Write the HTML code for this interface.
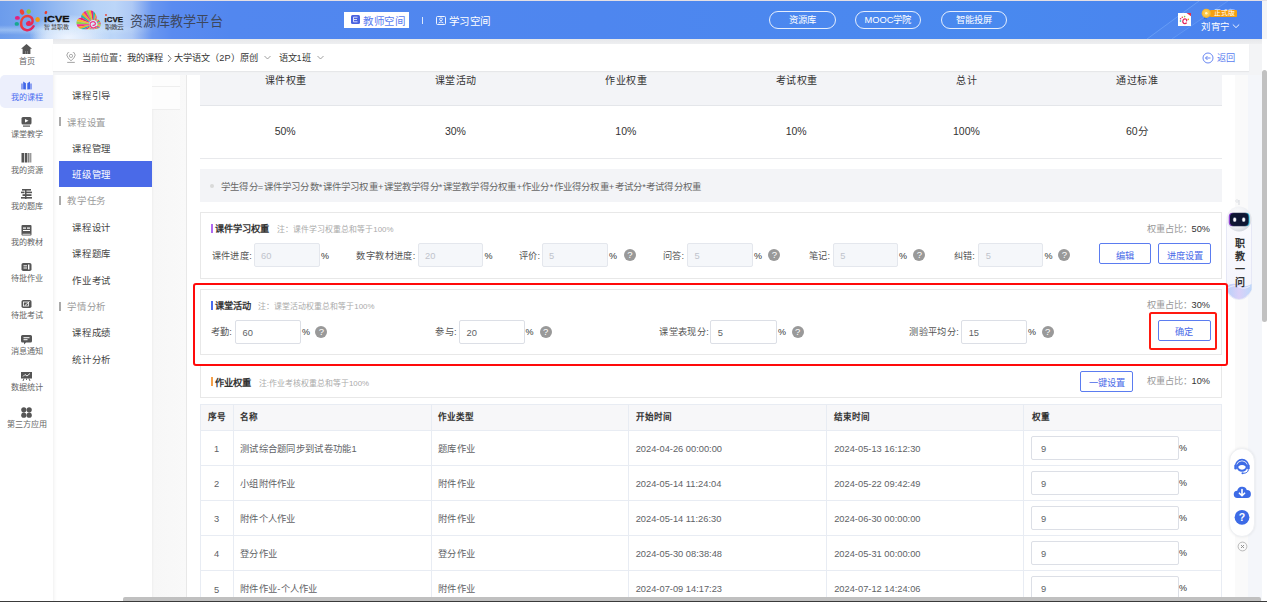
<!DOCTYPE html>
<html lang="zh-CN">
<head>
<meta charset="utf-8">
<style>
*{box-sizing:border-box;margin:0;padding:0}
html,body{width:1267px;height:602px;overflow:hidden}
body{font-family:"Liberation Sans",sans-serif;background:#f3f4f6;position:relative;color:#333;font-size:9px;line-height:1}
.a{position:absolute}
.t{position:absolute;white-space:nowrap;line-height:1}
#topline{left:0;top:0;width:1267px;height:1px;background:#e4dfe4}
#header{left:0;top:1px;width:1262px;height:38px;overflow:hidden;background:linear-gradient(90deg,#6c9cec 0px,#78a6ee 30px,#98bcf2 60px,#b6d2f7 95px,#bcd6f8 115px,#aec9f5 132px,#8db0f1 142px,#6a97f0 152px,#5a8bf0 172px,#5287ef 230px,#4e86ef 600px,#4989ef 1000px,#4b82ef 1262px)}
#leftnav{left:0;top:39px;width:53px;height:563px;background:#fff}
#crumb{left:53px;top:43.5px;width:1196px;height:27.5px;background:#fff;box-shadow:0 1px 1px rgba(0,0,0,.05)}
#gapband{left:53px;top:39px;width:1209px;height:4.5px;background:linear-gradient(180deg,#e6e7ea,#eeeff1)}
#submenu{left:53px;top:75px;width:99px;height:527px;background:linear-gradient(90deg,#f3f3f3 0,#fbfbfb 2px,#fff 4px)}
#main{left:187px;top:75px;width:1048px;height:527px;background:#fff}
#vline{left:186px;top:75px;width:1px;height:527px;background:#e8e8e8}
#strip1{left:1235px;top:75px;width:13px;height:527px;background:#fafafa}
#strip2{left:1248px;top:75px;width:14px;height:527px;background:#f4f6fa}
#scroll{left:1262px;top:39px;width:5px;height:563px;background:#fff}
#thumb{left:1262px;top:70px;width:5px;height:252px;background:#c1c1c1;border-radius:3px}
#hthumb{left:123px;top:597px;width:1138px;height:4px;background:#c0c0c0;border-radius:2px 2px 0 0}
#hline{left:0;top:601px;width:1267px;height:1px;background:#3a3a3a}
.pill{position:absolute;top:11px;height:18px;border:1px solid rgba(255,255,255,.85);border-radius:9px;color:#fff;font-size:9.3px;text-align:center;line-height:16.5px;font-weight:normal}
.nav .ic{position:absolute;left:21px;width:11px;height:10px}
.nav .tx{position:absolute;left:0;width:53px;text-align:center;font-size:7.8px;color:#666;white-space:nowrap}
.sub{position:absolute;left:72px;font-size:7.9px;color:#333;white-space:nowrap}
.subg{position:absolute;left:67px;font-size:7.9px;color:#999;white-space:nowrap}
.subbar{position:absolute;left:60px;width:1px;height:8px;background:#999}
</style>
</head>
<body>
<div id="topline" class="a"></div>
<div id="header" class="a">
  <!-- cloud glows -->
  <div class="a" style="left:30px;top:14px;width:80px;height:40px;border-radius:50%;background:radial-gradient(ellipse at center,rgba(235,243,255,.9) 0%,rgba(220,235,252,.5) 50%,rgba(200,222,250,0) 75%)"></div>
</div>

<!-- HEADER CONTENT -->
<svg class="a" style="left:1000px;top:1px" width="262" height="38" viewBox="0 0 262 38">
<polygon points="147,38 199,0 228,0 172,38" fill="#ffffff" opacity="0.03"/>
<path d="M147 38 L199 0" stroke="#8fc0ff" stroke-width="0.7" opacity="0.55"/>
<path d="M172 38 L228 0" stroke="#8fc0ff" stroke-width="0.6" opacity="0.45"/>
</svg>

<svg class="a" style="left:0;top:1px" width="260" height="38" viewBox="0 1 260 38">
  <defs>
    <radialGradient id="cl1" cx="0.5" cy="0.5" r="0.5">
      <stop offset="0" stop-color="#eef5ff" stop-opacity="0.95"/>
      <stop offset="0.6" stop-color="#dce9fb" stop-opacity="0.7"/>
      <stop offset="1" stop-color="#c8dcf8" stop-opacity="0"/>
    </radialGradient>
    <linearGradient id="eg" x1="0" y1="0" x2="1" y2="1">
      <stop offset="0" stop-color="#f04a2a"/>
      <stop offset="1" stop-color="#e0206a"/>
    </linearGradient>
    <linearGradient id="rb" x1="0" y1="0" x2="1" y2="0">
      <stop offset="0" stop-color="#f0308a"/>
      <stop offset="0.12" stop-color="#f5a623"/>
      <stop offset="0.24" stop-color="#2ec4a6"/>
      <stop offset="0.36" stop-color="#f0308a"/>
      <stop offset="0.48" stop-color="#f5a623"/>
      <stop offset="0.6" stop-color="#9ed24a"/>
      <stop offset="0.72" stop-color="#f0308a"/>
      <stop offset="0.84" stop-color="#f5a623"/>
      <stop offset="1" stop-color="#2ec4a6"/>
    </linearGradient>
  </defs>
  <ellipse cx="68" cy="38" rx="36" ry="18" fill="url(#cl1)"/><linearGradient id="band" x1="0" y1="0" x2="1" y2="0"><stop offset="0" stop-color="#d8ecfb" stop-opacity="0.4"/><stop offset="0.7" stop-color="#d8ecfb" stop-opacity="0.25"/><stop offset="1" stop-color="#d8ecfb" stop-opacity="0"/></linearGradient><linearGradient id="bandv" x1="0" y1="0" x2="0" y2="1"><stop offset="0" stop-color="#fff" stop-opacity="0"/><stop offset="0.5" stop-color="#fff" stop-opacity="1"/><stop offset="1" stop-color="#fff" stop-opacity="0"/></linearGradient><mask id="bm"><rect x="0" y="25" width="160" height="10" fill="url(#bandv)"/></mask><rect x="0" y="25" width="160" height="10" fill="url(#band)" mask="url(#bm)"/>
  <!-- flower logo -->
  <ellipse cx="22" cy="12" rx="2.1" ry="2.8" fill="#ee4436" transform="rotate(-20 22 12)"/>
  <ellipse cx="28.7" cy="11.6" rx="2.2" ry="2.4" fill="#8cc63e"/>
  <ellipse cx="17.4" cy="17.9" rx="2.5" ry="1.9" fill="#e4207e"/>
  <ellipse cx="37.6" cy="19.5" rx="2.3" ry="2.5" fill="#f39a0e"/>
  <ellipse cx="16.8" cy="23.9" rx="2.2" ry="1.9" fill="#16a890"/>
  <path d="M33.6 26.2 C31.5 29.5 28.5 30.5 26 30 C22.5 29.3 20.9 26 21.1 22.5 C21.4 18.5 24.5 16 28 16.1 C31.3 16.3 33 18.8 32.6 21.5 C32.2 24 30 25 28 24.6" fill="none" stroke="url(#eg)" stroke-width="2.5" stroke-linecap="round"/><ellipse cx="28.4" cy="23.3" rx="2.7" ry="2.1" transform="rotate(-35 28.4 23.3)" fill="#e5265e"/>
  <!-- iCVE 1 -->
  <ellipse cx="45.9" cy="12.6" rx="1.3" ry="1.6" fill="#e83a2a" transform="rotate(20 45.9 12.6)"/>
  <text x="44" y="21.8" font-family="Liberation Sans" font-weight="bold" font-size="9.6" fill="#111" stroke="#111" stroke-width="0.35" textLength="25.5" lengthAdjust="spacingAndGlyphs">ıCVE</text>
  <text x="44.3" y="28.9" font-size="5.6" fill="#3a3a3a" textLength="25.5" lengthAdjust="spacingAndGlyphs">智慧职教</text>
  <!-- cloud logo -->
  <defs><clipPath id="cloudclip"><path d="M77.5 26.5 C75 22.5 77 18 81 17.8 C81.3 12.5 85.5 10 89.8 10.2 C94.5 10.5 97 14.5 96.8 19.2 C100.5 19.8 101.8 23.8 100 27 C98.8 29 96 29.3 93 29.2 L82.5 29.2 C80.5 29.2 78.5 28 77.5 26.5 Z"/></clipPath></defs>
  <g clip-path="url(#cloudclip)"><polygon points="93.2,24.3 123.20,24.30 122.74,19.09" fill="#f0308a"/><polygon points="93.2,24.3 122.74,19.09 121.39,14.04" fill="#f5a623"/><polygon points="93.2,24.3 121.39,14.04 119.18,9.30" fill="#26b8a0"/><polygon points="93.2,24.3 119.18,9.30 116.18,5.02" fill="#e8237a"/><polygon points="93.2,24.3 116.18,5.02 112.48,1.32" fill="#f7b52c"/><polygon points="93.2,24.3 112.48,1.32 108.20,-1.68" fill="#8fd14f"/><polygon points="93.2,24.3 108.20,-1.68 103.46,-3.89" fill="#f0308a"/><polygon points="93.2,24.3 103.46,-3.89 98.41,-5.24" fill="#f5a623"/><polygon points="93.2,24.3 98.41,-5.24 93.20,-5.70" fill="#26b8a0"/><polygon points="93.2,24.3 93.20,-5.70 87.99,-5.24" fill="#e8237a"/><polygon points="93.2,24.3 87.99,-5.24 82.94,-3.89" fill="#f7b52c"/><polygon points="93.2,24.3 82.94,-3.89 78.20,-1.68" fill="#8fd14f"/><polygon points="93.2,24.3 78.20,-1.68 73.92,1.32" fill="#f0308a"/><polygon points="93.2,24.3 73.92,1.32 70.22,5.02" fill="#f5a623"/><polygon points="93.2,24.3 70.22,5.02 67.22,9.30" fill="#26b8a0"/><polygon points="93.2,24.3 67.22,9.30 65.01,14.04" fill="#e8237a"/><polygon points="93.2,24.3 65.01,14.04 63.66,19.09" fill="#f7b52c"/><polygon points="93.2,24.3 63.66,19.09 63.20,24.30" fill="#8fd14f"/><polygon points="93.2,24.3 63.20,24.30 63.66,29.51" fill="#f0308a"/><polygon points="93.2,24.3 63.66,29.51 65.01,34.56" fill="#f5a623"/><polygon points="93.2,24.3 65.01,34.56 67.22,39.30" fill="#26b8a0"/><polygon points="93.2,24.3 67.22,39.30 70.22,43.58" fill="#e8237a"/><polygon points="93.2,24.3 70.22,43.58 73.92,47.28" fill="#f7b52c"/><polygon points="93.2,24.3 73.92,47.28 78.20,50.28" fill="#8fd14f"/><polygon points="93.2,24.3 78.20,50.28 82.94,52.49" fill="#f0308a"/><polygon points="93.2,24.3 82.94,52.49 87.99,53.84" fill="#f5a623"/><polygon points="93.2,24.3 87.99,53.84 93.20,54.30" fill="#26b8a0"/><polygon points="93.2,24.3 93.20,54.30 98.41,53.84" fill="#e8237a"/><polygon points="93.2,24.3 98.41,53.84 103.46,52.49" fill="#f7b52c"/><polygon points="93.2,24.3 103.46,52.49 108.20,50.28" fill="#8fd14f"/><polygon points="93.2,24.3 108.20,50.28 112.48,47.28" fill="#f0308a"/><polygon points="93.2,24.3 112.48,47.28 116.18,43.58" fill="#f5a623"/><polygon points="93.2,24.3 116.18,43.58 119.18,39.30" fill="#26b8a0"/><polygon points="93.2,24.3 119.18,39.30 121.39,34.56" fill="#e8237a"/><polygon points="93.2,24.3 121.39,34.56 122.74,29.51" fill="#f7b52c"/><polygon points="93.2,24.3 122.74,29.51 123.20,24.30" fill="#8fd14f"/>
    <circle cx="93.2" cy="24.3" r="4.2" fill="#d6e8fb"/>
    <path d="M96.5 26.1 C95.2 28.8 90.2 28.3 90.0 24.8 C89.8 21.7 93.5 20.8 95.2 22.8 C96.2 24.3 94.2 26.1 92.60000000000001 24.900000000000002" fill="none" stroke="#ef3d86" stroke-width="1.3"/>
  </g>
  <circle cx="106" cy="15" r="0.9" fill="#e83a2a"/>
  <text x="104.5" y="21.8" font-family="Liberation Sans" font-weight="bold" font-size="6.8" fill="#1a1a1a" stroke="#1a1a1a" stroke-width="0.25" textLength="18.5" lengthAdjust="spacingAndGlyphs">ıCVE</text>
  <text x="104.5" y="28.6" font-size="5.4" fill="#3a3a3a" textLength="19" lengthAdjust="spacingAndGlyphs">职教云</text>
</svg>
<div class="t" style="left:130px;top:15px;font-size:13.1px;letter-spacing:0.3px;color:#3d475c">资源库教学平台</div>
<!-- tabs -->
<div class="a" style="left:344px;top:12px;width:65px;height:16px;background:#fff"></div>
<div class="a" style="left:351px;top:15px;width:9px;height:9px;background:#4a63e0;border-radius:1.5px"></div>
<svg class="a" style="left:351px;top:15px" width="9" height="9" viewBox="0 0 9 9"><path d="M2.5 2.2 L6.5 2.2 M2.5 4.5 L6 4.5 M2.5 6.8 L6.5 6.8 M2.5 2.2 L2.5 6.8" stroke="#e4eaff" stroke-width="0.9" fill="none"/></svg>
<div class="t" style="left:363px;top:15.7px;font-size:10.5px;letter-spacing:0.5px;color:#5a7cf0">教师空间</div>
<div class="a" style="left:422px;top:17px;width:1px;height:7px;background:rgba(255,255,255,.8)"></div>
<div class="a" style="left:436px;top:15.5px;width:10px;height:9px;border:1px solid rgba(255,255,255,.9);border-radius:1.5px"></div><svg class="a" style="left:436px;top:15.5px" width="10" height="9" viewBox="0 0 10 9"><circle cx="5" cy="3.3" r="1.4" fill="none" stroke="#fff" stroke-width="0.8"/><path d="M2.6 7 Q5 4.6 7.4 7" fill="none" stroke="#fff" stroke-width="0.8"/></svg>
<div class="t" style="left:448.5px;top:15.7px;font-size:10.5px;letter-spacing:0.5px;color:#fff">学习空间</div>
<!-- pills -->
<div class="pill" style="left:769px;width:67px">资源库</div>
<div class="pill" style="left:855px;width:66px">MOOC学院</div>
<div class="pill" style="left:941px;width:66px">智能投屏</div>
<!-- avatar -->
<div class="a" style="left:1178px;top:13px;width:13px;height:13px;background:#fff"></div>
<svg class="a" style="left:1178px;top:13px" width="13" height="13" viewBox="0 0 13 13">
  <circle cx="4.3" cy="4.2" r="0.8" fill="#ee4436"/><circle cx="6.6" cy="3.6" r="0.8" fill="#8cc63e"/><circle cx="2.6" cy="5.8" r="0.8" fill="#e4207e"/><circle cx="2.5" cy="8" r="0.8" fill="#16a890"/><circle cx="10.3" cy="6.4" r="0.8" fill="#f39a0e"/>
  <path d="M8.6 9.6 C7.8 11 5.5 11.2 4.9 9.3 C4.4 7.5 5.6 5.8 7.2 5.9 C8.6 6 9 7.4 8.4 8.3" fill="none" stroke="#e52a60" stroke-width="1.3"/>
  <path d="M8.5 0 L13 0 L13 3.2 Z" fill="#e8304a"/>
</svg>
<!-- badge -->
<div class="a" style="left:1210px;top:9.6px;width:26.5px;height:7.6px;background:#f5a00f;border-radius:1px"></div>
<svg class="a" style="left:1201px;top:7.5px" width="11" height="12" viewBox="0 0 11 12"><path d="M3.5 8 L2.8 11.5 L4.5 10.5 L5.5 11.8 L6 8.5 Z" fill="#2f6fd8"/><circle cx="5.3" cy="5.3" r="4.6" fill="#f7b731"/><circle cx="5.3" cy="5.3" r="3.2" fill="#fbc94a"/><circle cx="5.3" cy="5.3" r="1.3" fill="#fff4c8"/></svg>
<div class="t" style="left:1213.5px;top:9.6px;font-size:6.8px;letter-spacing:0.3px;color:#fff">正式版</div>
<div class="t" style="left:1201px;top:22px;font-size:9.4px;letter-spacing:0.6px;color:#fff">刘宵宁</div>
<svg class="a" style="left:1232px;top:22.8px" width="8" height="6" viewBox="0 0 8 6"><path d="M0.8 1.5 L4 4.6 L7.2 1.5" fill="none" stroke="#fff" stroke-width="0.9"/></svg>
<div id="leftnav" class="a"></div>
<div id="gapband" class="a"></div><div id="crumb" class="a"></div>
<div class="a" style="left:0;top:75px;width:53px;height:33px;background:#eceffc;border-radius:5px 0 0 5px"></div>
<svg class="a" style="left:21px;top:43.5px" width="11" height="11" viewBox="0 0 11 11"><path d="M5.5 0 L11 4.8 L9.4 4.8 L9.4 10 L6.6 10 L6.6 7 L4.4 7 L4.4 10 L1.6 10 L1.6 4.8 L0 4.8 Z" fill="#555"/><rect x="4.4" y="7" width="2.2" height="3" fill="#555"/></svg>
<div class="t" style="left:0;width:53px;text-align:center;top:58.0px;font-size:8.1px;color:#666">首页</div>
<svg class="a" style="left:21px;top:80.5px" width="11" height="11" viewBox="0 0 11 11"><rect x="0" y="2.5" width="2.3" height="5.9" fill="#8ea2f2"/><rect x="8.9" y="2.5" width="2.3" height="5.9" fill="#8ea2f2"/><polygon points="2.2,0.5 4.9,2.3 4.9,8.6 2.2,8.2" fill="#3f66e8"/><polygon points="6.3,2.3 9,0.5 9,8.2 6.3,8.6" fill="#3f66e8"/></svg>
<div class="t" style="left:0;width:53px;text-align:center;top:94.0px;font-size:8.1px;color:#4a6cf0">我的课程</div>
<svg class="a" style="left:21px;top:117px" width="11" height="11" viewBox="0 0 11 11"><rect x="0.5" y="0" width="10" height="7.5" rx="1.5" fill="#555"/><path d="M4 2 L7.5 3.8 L4 5.6 Z" fill="#fff"/><rect x="2" y="8.5" width="7" height="1.2" fill="#555"/></svg>
<div class="t" style="left:0;width:53px;text-align:center;top:131.0px;font-size:8.1px;color:#666">课堂教学</div>
<svg class="a" style="left:21px;top:153px" width="11" height="11" viewBox="0 0 11 11"><rect x="0.5" y="0" width="2.6" height="9.5" fill="#555"/><rect x="3.8" y="0" width="2.6" height="9.5" fill="#555"/><rect x="7.1" y="0" width="1.4" height="9.5" fill="#777"/><rect x="9" y="0" width="1.4" height="9.5" fill="#999"/></svg>
<div class="t" style="left:0;width:53px;text-align:center;top:166.8px;font-size:8.1px;color:#666">我的资源</div>
<svg class="a" style="left:21px;top:188.7px" width="11" height="11" viewBox="0 0 11 11"><rect x="1" y="0" width="9" height="1.6" fill="#555"/><rect x="0" y="2.6" width="3.5" height="1.6" fill="#555"/><rect x="5" y="2.6" width="6" height="1.6" fill="#555"/><rect x="1.5" y="5.2" width="9" height="1.8" fill="#555"/><rect x="0" y="8" width="4" height="1.6" fill="#555"/><rect x="5" y="8" width="6" height="1.6" fill="#555"/><rect x="4" y="0" width="1.5" height="10" fill="#555"/></svg>
<div class="t" style="left:0;width:53px;text-align:center;top:202.5px;font-size:8.1px;color:#666">我的题库</div>
<svg class="a" style="left:21px;top:225px" width="11" height="11" viewBox="0 0 11 11"><rect x="0.5" y="0" width="10" height="10.5" rx="1" fill="#555"/><rect x="2" y="2.5" width="3" height="1.2" fill="#fff"/><rect x="6" y="2.5" width="3" height="1.2" fill="#fff"/><rect x="2" y="5" width="7" height="1" fill="#fff"/><rect x="1.5" y="8.8" width="8" height="0.8" fill="#fff"/></svg>
<div class="t" style="left:0;width:53px;text-align:center;top:239.0px;font-size:8.1px;color:#666">我的教材</div>
<svg class="a" style="left:21px;top:263px" width="11" height="11" viewBox="0 0 11 11"><rect x="0.5" y="0" width="10" height="8" rx="1.8" fill="#555"/><rect x="2.5" y="2.3" width="3.5" height="1" fill="#fff"/><rect x="2.5" y="4.5" width="3.5" height="1" fill="#fff"/><rect x="7" y="1.5" width="1.4" height="5" fill="#fff"/></svg>
<div class="t" style="left:0;width:53px;text-align:center;top:275.0px;font-size:8.1px;color:#666">待批作业</div>
<svg class="a" style="left:21px;top:299.7px" width="11" height="11" viewBox="0 0 11 11"><rect x="0.5" y="0" width="10" height="8" rx="1.8" fill="#555"/><rect x="2.5" y="2" width="5" height="4" fill="none" stroke="#fff" stroke-width="0.8"/><path d="M4 5.5 L8.5 1.5" stroke="#fff" stroke-width="0.9"/></svg>
<div class="t" style="left:0;width:53px;text-align:center;top:311.5px;font-size:8.1px;color:#666">待批考试</div>
<svg class="a" style="left:21px;top:335px" width="11" height="11" viewBox="0 0 11 11"><path d="M1.5 0 L9.5 0 Q11 0 11 1.5 L11 6 Q11 7.5 9.5 7.5 L5 7.5 L3 9.5 L3 7.5 L1.5 7.5 Q0 7.5 0 6 L0 1.5 Q0 0 1.5 0 Z" fill="#555"/><rect x="2.5" y="2.2" width="6" height="1" fill="#fff"/><rect x="2.5" y="4.2" width="4" height="1" fill="#fff"/></svg>
<div class="t" style="left:0;width:53px;text-align:center;top:347.7px;font-size:8.1px;color:#666">消息通知</div>
<svg class="a" style="left:21px;top:371.7px" width="11" height="11" viewBox="0 0 11 11"><rect x="0" y="0" width="11" height="6.5" fill="#555"/><path d="M2 4.5 L4 2.5 L6 4 L9 1.5" stroke="#fff" stroke-width="0.9" fill="none"/><path d="M3 6.5 L2 9 M8 6.5 L9 9 M5.5 6.5 L5.5 8" stroke="#555" stroke-width="0.9"/></svg>
<div class="t" style="left:0;width:53px;text-align:center;top:384.3px;font-size:8.1px;color:#666">数据统计</div>
<svg class="a" style="left:21px;top:406.7px" width="11" height="11" viewBox="0 0 11 11"><circle cx="2.8" cy="2.8" r="2.6" fill="#555"/><circle cx="8.2" cy="2.8" r="2.6" fill="#555"/><circle cx="2.8" cy="8.2" r="2.6" fill="#555"/><circle cx="8.2" cy="8.2" r="2.6" fill="#555"/></svg>
<div class="t" style="left:0;width:53px;text-align:center;top:421.0px;font-size:8.1px;color:#666">第三方应用</div>

<div id="submenu" class="a"></div>

<!-- breadcrumb -->
<svg class="a" style="left:66px;top:52px" width="10" height="11" viewBox="0 0 10 11"><path d="M5 8.8 L2.1 5.9 A4 4 0 1 1 7.9 5.9 Z" fill="none" stroke="#9a9a9a" stroke-width="0.9" stroke-linejoin="round"/><circle cx="5" cy="3.9" r="1.6" fill="none" stroke="#9a9a9a" stroke-width="0.8"/><path d="M1.2 10.4 L8.8 10.4" stroke="#9a9a9a" stroke-width="0.9"/></svg>
<div class="t" style="left:82px;top:54.4px;font-size:9.2px;color:#555">当前位置：<span style="color:#333">我的课程</span></div>
<svg class="a" style="left:167px;top:54px" width="5" height="9" viewBox="0 0 5 9"><path d="M1 1 L4 4.5 L1 8" fill="none" stroke="#555" stroke-width="0.8"/></svg>
<div class="t" style="left:174.3px;top:54.2px;font-size:9.2px;color:#333">大学语文（2P）原创</div>
<svg class="a" style="left:264px;top:55px" width="7" height="5" viewBox="0 0 7 5"><path d="M0.5 1 L3.5 4 L6.5 1" fill="none" stroke="#888" stroke-width="0.8"/></svg>
<div class="t" style="left:278.6px;top:54.2px;font-size:9.2px;color:#333">语文1班</div>
<svg class="a" style="left:316.5px;top:55px" width="7" height="5" viewBox="0 0 7 5"><path d="M0.5 1 L3.5 4 L6.5 1" fill="none" stroke="#888" stroke-width="0.8"/></svg>
<svg class="a" style="left:1202px;top:52px" width="12" height="12" viewBox="0 0 12 12"><circle cx="6" cy="6" r="5" fill="none" stroke="#5a7cf0" stroke-width="0.9"/><path d="M8.5 6 L3.5 6 M5.5 4 L3.5 6 L5.5 8" fill="none" stroke="#5a7cf0" stroke-width="0.9"/></svg>
<div class="t" style="left:1216.5px;top:54.2px;font-size:9.2px;color:#5a7cf0">返回</div>
<!-- submenu -->
<div class="a" style="left:59px;top:161px;width:93px;height:26px;background:#4a6ae8"></div>
<div class="t" style="left:72.4px;top:91.3px;font-size:9.4px;letter-spacing:0.6px;color:#444">课程引导</div>
<div class="a" style="left:59px;top:117.4px;width:2px;height:9px;background:#aaa"></div>
<div class="t" style="left:67.4px;top:117.8px;font-size:9.4px;letter-spacing:0.6px;color:#999">课程设置</div>
<div class="t" style="left:72.4px;top:143.8px;font-size:9.4px;letter-spacing:0.6px;color:#444">课程管理</div>
<div class="t" style="left:72.4px;top:169.8px;font-size:9.4px;letter-spacing:0.6px;color:#fff">班级管理</div>
<div class="a" style="left:59px;top:195.9px;width:2px;height:9px;background:#aaa"></div>
<div class="t" style="left:67.4px;top:196.3px;font-size:9.4px;letter-spacing:0.6px;color:#999">教学任务</div>
<div class="t" style="left:72.4px;top:222.8px;font-size:9.4px;letter-spacing:0.6px;color:#444">课程设计</div>
<div class="t" style="left:72.4px;top:249.4px;font-size:9.4px;letter-spacing:0.6px;color:#444">课程题库</div>
<div class="t" style="left:72.4px;top:275.8px;font-size:9.4px;letter-spacing:0.6px;color:#444">作业考试</div>
<div class="a" style="left:59px;top:302.0px;width:2px;height:9px;background:#aaa"></div>
<div class="t" style="left:67.4px;top:302.4px;font-size:9.4px;letter-spacing:0.6px;color:#999">学情分析</div>
<div class="t" style="left:72.4px;top:328.4px;font-size:9.4px;letter-spacing:0.6px;color:#444">课程成绩</div>
<div class="t" style="left:72.4px;top:354.8px;font-size:9.4px;letter-spacing:0.6px;color:#444">统计分析</div>

<div class="a" style="left:152px;top:75px;width:34px;height:527px;background:linear-gradient(90deg,#efefef 0,#f7f7f7 2px,#f9f9f9 100%)"></div>
<div class="a" style="left:152px;top:75px;width:28px;height:11px;background:#fdfdfd"></div>
<div class="a" style="left:152px;top:86px;width:28px;height:1px;background:#eeeeee"></div>
<div class="a" style="left:152px;top:87px;width:28px;height:22px;background:#fdfdfd"></div>
<div class="a" style="left:152px;top:109px;width:28px;height:1px;background:#eeeeee"></div>
<div id="vline" class="a"></div>
<div id="main" class="a"></div>
<div class="a" style="left:200px;top:75px;width:1022px;height:31px;background:#f3f4f7;border-bottom:1px solid #e4e6ea"></div>
<div class="a" style="left:200px;top:158px;width:1022px;height:1px;background:#e8e9ec"></div>
<div class="t" style="left:200.0px;width:170.3px;text-align:center;top:76.1px;font-size:10px;letter-spacing:0.5px;text-indent:1px;color:#333">课件权重</div>
<div class="t" style="left:200.0px;width:170.3px;text-align:center;top:125.5px;font-size:10.5px;color:#333">50%</div>
<div class="t" style="left:370.3px;width:170.3px;text-align:center;top:76.1px;font-size:10px;letter-spacing:0.5px;text-indent:1px;color:#333">课堂活动</div>
<div class="t" style="left:370.3px;width:170.3px;text-align:center;top:125.5px;font-size:10.5px;color:#333">30%</div>
<div class="t" style="left:540.7px;width:170.3px;text-align:center;top:76.1px;font-size:10px;letter-spacing:0.5px;text-indent:1px;color:#333">作业权重</div>
<div class="t" style="left:540.7px;width:170.3px;text-align:center;top:125.5px;font-size:10.5px;color:#333">10%</div>
<div class="t" style="left:711.0px;width:170.3px;text-align:center;top:76.1px;font-size:10px;letter-spacing:0.5px;text-indent:1px;color:#333">考试权重</div>
<div class="t" style="left:711.0px;width:170.3px;text-align:center;top:125.5px;font-size:10.5px;color:#333">10%</div>
<div class="t" style="left:881.3px;width:170.3px;text-align:center;top:76.1px;font-size:10px;letter-spacing:0.5px;text-indent:1px;color:#333">总计</div>
<div class="t" style="left:881.3px;width:170.3px;text-align:center;top:125.5px;font-size:10.5px;color:#333">100%</div>
<div class="t" style="left:1051.7px;width:170.3px;text-align:center;top:76.1px;font-size:10px;letter-spacing:0.5px;text-indent:1px;color:#333">通过标准</div>
<div class="t" style="left:1051.7px;width:170.3px;text-align:center;top:125.5px;font-size:10.5px;color:#333">60分</div>
<div class="a" style="left:200px;top:169px;width:1022px;height:33px;background:#f3f4f7"></div>
<div class="a" style="left:210.3px;top:183.6px;width:4px;height:4px;border-radius:50%;background:#d9d9d9"></div>
<div class="t" style="left:221px;top:181.6px;font-size:9.4px;letter-spacing:0.21px;color:#666">学生得分=课件学习分数*课件学习权重+课堂教学得分*课堂教学得分权重+作业分*作业得分权重+考试分*考试得分权重</div>
<div class="a" style="left:200px;top:212px;width:1022px;height:67px;border:1px solid #e8e8e8"></div>
<div class="a" style="left:211px;top:224px;width:2px;height:9px;background:#b06af2"></div>
<div class="t" style="left:214.8px;top:225.3px;font-size:9.2px;font-weight:bold;color:#333">课件学习权重</div>
<div class="t" style="left:277.3px;top:226.2px;font-size:7.9px;color:#aaa">注：课件学习权重总和等于100%</div>
<div class="t" style="left:1100px;width:1110px;text-align:right;top:224.8px;font-size:9.2px;color:#999;width:110px">权重占比：<span style="color:#333">50%</span></div>
<div class="t" style="left:211.6px;top:251.7px;font-size:9.2px;letter-spacing:0.4px;color:#555">课件进度:</div>
<div class="a" style="left:254px;top:243px;width:66px;height:24px;background:#f5f7fa;border:1px solid #e4e7ed;border-radius:2px"></div>
<div class="t" style="left:261.0px;top:251.7px;font-size:9.3px;color:#c0c4cc">60</div>
<div class="t" style="left:321px;top:251.7px;font-size:9px;color:#333">%</div>
<div class="t" style="left:356.4px;top:251.7px;font-size:9.2px;letter-spacing:0.4px;color:#555">数字教材进度:</div>
<div class="a" style="left:418px;top:243px;width:65px;height:24px;background:#f5f7fa;border:1px solid #e4e7ed;border-radius:2px"></div>
<div class="t" style="left:425.0px;top:251.7px;font-size:9.3px;color:#c0c4cc">20</div>
<div class="t" style="left:484.4px;top:251.7px;font-size:9px;color:#333">%</div>
<div class="t" style="left:518.7px;top:251.7px;font-size:9.2px;letter-spacing:0.4px;color:#555">评价:</div>
<div class="a" style="left:542px;top:243px;width:66px;height:24px;background:#f5f7fa;border:1px solid #e4e7ed;border-radius:2px"></div>
<div class="t" style="left:549.0px;top:251.7px;font-size:9.3px;color:#c0c4cc">5</div>
<div class="t" style="left:609px;top:251.7px;font-size:9px;color:#333">%</div>
<div class="a" style="left:623.9px;top:248.8px;width:12px;height:12px;border-radius:50%;background:#999;color:#fff;font-size:9.5px;font-weight:normal;text-align:center;line-height:12.5px">?</div>
<div class="t" style="left:662.7px;top:251.7px;font-size:9.2px;letter-spacing:0.4px;color:#555">问答:</div>
<div class="a" style="left:687px;top:243px;width:66px;height:24px;background:#f5f7fa;border:1px solid #e4e7ed;border-radius:2px"></div>
<div class="t" style="left:694.4px;top:251.7px;font-size:9.3px;color:#c0c4cc">5</div>
<div class="t" style="left:754px;top:251.7px;font-size:9px;color:#333">%</div>
<div class="a" style="left:768.4px;top:248.8px;width:12px;height:12px;border-radius:50%;background:#999;color:#fff;font-size:9.5px;font-weight:normal;text-align:center;line-height:12.5px">?</div>
<div class="t" style="left:808.6px;top:251.7px;font-size:9.2px;letter-spacing:0.4px;color:#555">笔记:</div>
<div class="a" style="left:833px;top:243px;width:65px;height:24px;background:#f5f7fa;border:1px solid #e4e7ed;border-radius:2px"></div>
<div class="t" style="left:840.3px;top:251.7px;font-size:9.3px;color:#c0c4cc">5</div>
<div class="t" style="left:899px;top:251.7px;font-size:9px;color:#333">%</div>
<div class="a" style="left:913.4px;top:248.8px;width:12px;height:12px;border-radius:50%;background:#999;color:#fff;font-size:9.5px;font-weight:normal;text-align:center;line-height:12.5px">?</div>
<div class="t" style="left:953.5px;top:251.7px;font-size:9.2px;letter-spacing:0.4px;color:#555">纠错:</div>
<div class="a" style="left:978px;top:243px;width:65px;height:24px;background:#f5f7fa;border:1px solid #e4e7ed;border-radius:2px"></div>
<div class="t" style="left:985.8px;top:251.7px;font-size:9.3px;color:#c0c4cc">5</div>
<div class="t" style="left:1044.4px;top:251.7px;font-size:9px;color:#333">%</div>
<div class="a" style="left:1058.3px;top:248.8px;width:12px;height:12px;border-radius:50%;background:#999;color:#fff;font-size:9.5px;font-weight:normal;text-align:center;line-height:12.5px">?</div>
<div class="a" style="left:1098.6px;top:243px;width:52.8px;height:21.0px;border:1px solid #5b7cf0;border-radius:2px;background:#fff"></div>
<div class="t" style="left:1098.6px;width:52.8px;text-align:center;top:251.9px;font-size:9.2px;color:#4a6ae8">编辑</div>
<div class="a" style="left:1158px;top:243px;width:53.0px;height:21.0px;border:1px solid #5b7cf0;border-radius:2px;background:#fff"></div>
<div class="t" style="left:1158px;width:53.0px;text-align:center;top:251.9px;font-size:9.2px;color:#4a6ae8">进度设置</div>
<div class="a" style="left:200px;top:289px;width:1022px;height:66px;border:1px solid #e8e8e8"></div>
<div class="a" style="left:211px;top:301px;width:2px;height:9px;background:#4a6cf0"></div>
<div class="t" style="left:214.8px;top:302.1px;font-size:9.2px;font-weight:bold;color:#333">课堂活动</div>
<div class="t" style="left:258.3px;top:303.0px;font-size:7.9px;color:#aaa">注：课堂活动权重总和等于100%</div>
<div class="t" style="left:1100px;width:1110px;text-align:right;top:301.1px;font-size:9.2px;color:#999;width:110px">权重占比：<span style="color:#333">30%</span></div>
<div class="t" style="left:210.5px;top:328.4px;font-size:9.2px;letter-spacing:0.4px;color:#555">考勤:</div>
<div class="a" style="left:235px;top:320px;width:66px;height:24px;background:#fff;border:1px solid #dcdfe6;border-radius:2px"></div>
<div class="t" style="left:242.6px;top:328.5px;font-size:9.3px;color:#606266">60</div>
<div class="t" style="left:302px;top:328.4px;font-size:9px;color:#333">%</div>
<div class="a" style="left:315.4px;top:325.5px;width:12px;height:12px;border-radius:50%;background:#999;color:#fff;font-size:9.5px;font-weight:normal;text-align:center;line-height:12.5px">?</div>
<div class="t" style="left:435.3px;top:328.4px;font-size:9.2px;letter-spacing:0.4px;color:#555">参与:</div>
<div class="a" style="left:459px;top:320px;width:66px;height:24px;background:#fff;border:1px solid #dcdfe6;border-radius:2px"></div>
<div class="t" style="left:466.5px;top:328.5px;font-size:9.3px;color:#606266">20</div>
<div class="t" style="left:525.6px;top:328.4px;font-size:9px;color:#333">%</div>
<div class="a" style="left:539.6px;top:325.5px;width:12px;height:12px;border-radius:50%;background:#999;color:#fff;font-size:9.5px;font-weight:normal;text-align:center;line-height:12.5px">?</div>
<div class="t" style="left:659.2px;top:328.4px;font-size:9.2px;letter-spacing:0.4px;color:#555">课堂表现分:</div>
<div class="a" style="left:710px;top:320px;width:67px;height:24px;background:#fff;border:1px solid #dcdfe6;border-radius:2px"></div>
<div class="t" style="left:717.7px;top:328.5px;font-size:9.3px;color:#606266">5</div>
<div class="t" style="left:777.9px;top:328.4px;font-size:9px;color:#333">%</div>
<div class="a" style="left:791.7px;top:325.5px;width:12px;height:12px;border-radius:50%;background:#999;color:#fff;font-size:9.5px;font-weight:normal;text-align:center;line-height:12.5px">?</div>
<div class="t" style="left:909.2px;top:328.4px;font-size:9.2px;letter-spacing:0.4px;color:#555">测验平均分:</div>
<div class="a" style="left:961px;top:320px;width:66px;height:24px;background:#fff;border:1px solid #dcdfe6;border-radius:2px"></div>
<div class="t" style="left:968.7px;top:328.5px;font-size:9.3px;color:#606266">15</div>
<div class="t" style="left:1027.9px;top:328.4px;font-size:9px;color:#333">%</div>
<div class="a" style="left:1041.7px;top:325.5px;width:12px;height:12px;border-radius:50%;background:#999;color:#fff;font-size:9.5px;font-weight:normal;text-align:center;line-height:12.5px">?</div>
<div class="a" style="left:1158px;top:320px;width:52.5px;height:21.0px;border:1px solid #5b7cf0;border-radius:2px;background:#fff"></div>
<div class="t" style="left:1158px;width:52.5px;text-align:center;top:328.4px;font-size:9.2px;color:#4a6ae8">确定</div>
<div class="a" style="left:1148.6px;top:311.6px;width:68px;height:38px;border:2.8px solid #ff1a10;border-radius:2.5px"></div>
<div class="a" style="left:193.2px;top:282.6px;width:1034.6px;height:83px;border:2.4px solid #ff0a0a;border-radius:3px;z-index:5"></div>
<div class="a" style="left:200px;top:364px;width:1022px;height:34px;border:1px solid #e8e8e8;border-top:none"></div>
<div class="a" style="left:211px;top:377px;width:2px;height:9px;background:#f5a04a"></div>
<div class="t" style="left:214.8px;top:378.9px;font-size:9.2px;font-weight:bold;color:#333">作业权重</div>
<div class="t" style="left:258.7px;top:379.8px;font-size:7.9px;color:#aaa">注:作业考核权重总和等于100%</div>
<div class="t" style="left:1100px;width:1110px;text-align:right;top:377.1px;font-size:9.2px;color:#999;width:110px">权重占比：<span style="color:#333">10%</span></div>
<div class="a" style="left:1080px;top:371px;width:53.0px;height:20.5px;border:1px solid #5b7cf0;border-radius:2px;background:#fff"></div>
<div class="t" style="left:1080px;width:53.0px;text-align:center;top:379.1px;font-size:9.2px;color:#4a6ae8">一键设置</div>
<div class="a" style="left:200px;top:404px;width:1022px;height:200px;border:1px solid #e8ecf3;border-bottom:none"></div>
<div class="a" style="left:201px;top:405px;width:1020px;height:25px;background:#f7f7f9"></div>
<div class="a" style="left:201px;top:430px;width:1020px;height:1px;background:#e8ecf3"></div>
<div class="a" style="left:201px;top:465px;width:1020px;height:1px;background:#e8ecf3"></div>
<div class="a" style="left:201px;top:500px;width:1020px;height:1px;background:#e8ecf3"></div>
<div class="a" style="left:201px;top:535px;width:1020px;height:1px;background:#e8ecf3"></div>
<div class="a" style="left:201px;top:570px;width:1020px;height:1px;background:#e8ecf3"></div>
<div class="a" style="left:233px;top:405px;width:1px;height:200px;background:#e8ecf3"></div>
<div class="a" style="left:431px;top:405px;width:1px;height:200px;background:#e8ecf3"></div>
<div class="a" style="left:628px;top:405px;width:1px;height:200px;background:#e8ecf3"></div>
<div class="a" style="left:826px;top:405px;width:1px;height:200px;background:#e8ecf3"></div>
<div class="a" style="left:1023px;top:405px;width:1px;height:200px;background:#e8ecf3"></div>
<div class="t" style="left:200px;width:33px;text-align:center;top:413.1px;font-size:8.6px;font-weight:bold;color:#333">序号</div>
<div class="t" style="left:240px;top:413.1px;font-size:8.6px;font-weight:bold;color:#333">名称</div>
<div class="t" style="left:438.2px;top:413.1px;font-size:8.6px;font-weight:bold;color:#333">作业类型</div>
<div class="t" style="left:635.7px;top:413.1px;font-size:8.6px;font-weight:bold;color:#333">开始时间</div>
<div class="t" style="left:834.2px;top:413.1px;font-size:8.6px;font-weight:bold;color:#333">结束时间</div>
<div class="t" style="left:1031.6px;top:413.1px;font-size:8.6px;font-weight:bold;color:#333">权重</div>
<div class="t" style="left:200px;width:33px;text-align:center;top:444.5px;font-size:9.3px;color:#606266">1</div>
<div class="t" style="left:240px;top:444.5px;font-size:9.3px;letter-spacing:0.3px;color:#606266">测试综合题同步到试卷功能1</div>
<div class="t" style="left:438.2px;top:444.5px;font-size:9.3px;letter-spacing:0.3px;color:#606266">题库作业</div>
<div class="t" style="left:635.7px;top:444.5px;font-size:9.3px;color:#606266">2024-04-26 00:00:00</div>
<div class="t" style="left:834.2px;top:444.5px;font-size:9.3px;color:#606266">2024-05-13 16:12:30</div>
<div class="a" style="left:1031px;top:436px;width:147.5px;height:24px;background:#fff;border:1px solid #dcdfe6;border-radius:2px"></div>
<div class="t" style="left:1041px;top:444.5px;font-size:9.3px;color:#606266">9</div>
<div class="t" style="left:1179px;top:444.2px;font-size:9px;color:#333">%</div>
<div class="t" style="left:200px;width:33px;text-align:center;top:479.5px;font-size:9.3px;color:#606266">2</div>
<div class="t" style="left:240px;top:479.5px;font-size:9.3px;letter-spacing:0.3px;color:#606266">小组附件作业</div>
<div class="t" style="left:438.2px;top:479.5px;font-size:9.3px;letter-spacing:0.3px;color:#606266">附件作业</div>
<div class="t" style="left:635.7px;top:479.5px;font-size:9.3px;color:#606266">2024-05-14 11:24:04</div>
<div class="t" style="left:834.2px;top:479.5px;font-size:9.3px;color:#606266">2024-05-22 09:42:49</div>
<div class="a" style="left:1031px;top:471px;width:147.5px;height:24px;background:#fff;border:1px solid #dcdfe6;border-radius:2px"></div>
<div class="t" style="left:1041px;top:479.5px;font-size:9.3px;color:#606266">9</div>
<div class="t" style="left:1179px;top:479.2px;font-size:9px;color:#333">%</div>
<div class="t" style="left:200px;width:33px;text-align:center;top:514.5px;font-size:9.3px;color:#606266">3</div>
<div class="t" style="left:240px;top:514.5px;font-size:9.3px;letter-spacing:0.3px;color:#606266">附件个人作业</div>
<div class="t" style="left:438.2px;top:514.5px;font-size:9.3px;letter-spacing:0.3px;color:#606266">附件作业</div>
<div class="t" style="left:635.7px;top:514.5px;font-size:9.3px;color:#606266">2024-05-14 11:26:30</div>
<div class="t" style="left:834.2px;top:514.5px;font-size:9.3px;color:#606266">2024-06-30 00:00:00</div>
<div class="a" style="left:1031px;top:506px;width:147.5px;height:24px;background:#fff;border:1px solid #dcdfe6;border-radius:2px"></div>
<div class="t" style="left:1041px;top:514.5px;font-size:9.3px;color:#606266">9</div>
<div class="t" style="left:1179px;top:514.2px;font-size:9px;color:#333">%</div>
<div class="t" style="left:200px;width:33px;text-align:center;top:549.5px;font-size:9.3px;color:#606266">4</div>
<div class="t" style="left:240px;top:549.5px;font-size:9.3px;letter-spacing:0.3px;color:#606266">登分作业</div>
<div class="t" style="left:438.2px;top:549.5px;font-size:9.3px;letter-spacing:0.3px;color:#606266">登分作业</div>
<div class="t" style="left:635.7px;top:549.5px;font-size:9.3px;color:#606266">2024-05-30 08:38:48</div>
<div class="t" style="left:834.2px;top:549.5px;font-size:9.3px;color:#606266">2024-05-31 00:00:00</div>
<div class="a" style="left:1031px;top:541px;width:147.5px;height:24px;background:#fff;border:1px solid #dcdfe6;border-radius:2px"></div>
<div class="t" style="left:1041px;top:549.5px;font-size:9.3px;color:#606266">9</div>
<div class="t" style="left:1179px;top:549.2px;font-size:9px;color:#333">%</div>
<div class="t" style="left:200px;width:33px;text-align:center;top:585.8px;font-size:9.3px;color:#606266">5</div>
<div class="t" style="left:240px;top:584.5px;font-size:9.3px;letter-spacing:0.3px;color:#606266">附件作业-个人作业</div>
<div class="t" style="left:438.2px;top:584.5px;font-size:9.3px;letter-spacing:0.3px;color:#606266">附件作业</div>
<div class="t" style="left:635.7px;top:584.5px;font-size:9.3px;color:#606266">2024-07-09 14:17:23</div>
<div class="t" style="left:834.2px;top:584.5px;font-size:9.3px;color:#606266">2024-07-12 14:24:06</div>
<div class="a" style="left:1031px;top:576px;width:147.5px;height:24px;background:#fff;border:1px solid #dcdfe6;border-radius:2px"></div>
<div class="t" style="left:1041px;top:584.5px;font-size:9.3px;color:#606266">9</div>
<div class="t" style="left:1179px;top:584.2px;font-size:9px;color:#333">%</div>
<div id="strip1" class="a"></div>
<div id="strip2" class="a"></div>

<!-- robot widget -->
<div class="a" style="left:1226px;top:212px;width:26px;height:88px;border-radius:13px;background:linear-gradient(180deg,#fbfbfe 0%,#f3f4fc 100%);border:1px solid #e6e8f6"></div>
<svg class="a" style="left:1224px;top:197px" width="30" height="102" viewBox="0 0 30 102">
  <defs>
    <radialGradient id="head" cx="0.4" cy="0.35" r="0.7"><stop offset="0" stop-color="#ffffff"/><stop offset="0.7" stop-color="#eceef2"/><stop offset="1" stop-color="#cfd3da"/></radialGradient>
    <linearGradient id="visor" x1="0" y1="0" x2="1" y2="0"><stop offset="0" stop-color="#a44ce8"/><stop offset="0.25" stop-color="#1c2444"/><stop offset="0.75" stop-color="#1c2444"/><stop offset="1" stop-color="#3ad0f0"/></linearGradient>
    <linearGradient id="wave" x1="0" y1="0" x2="1" y2="0"><stop offset="0" stop-color="#8fb8f7"/><stop offset="0.5" stop-color="#c9b8f5"/><stop offset="1" stop-color="#9cc6fa"/></linearGradient>
  </defs>
  <path d="M15 3 L15 8" stroke="#d5d8de" stroke-width="1"/><circle cx="13" cy="4" r="1.3" fill="none" stroke="#d5d8de" stroke-width="0.6"/>
  <circle cx="15" cy="22" r="12.5" fill="url(#head)"/>
  <rect x="4.7" y="15.7" width="21" height="13.6" rx="4" fill="url(#visor)"/>
  <rect x="6" y="16.6" width="18.6" height="11.8" rx="3.4" fill="#0e1632"/>
  <ellipse cx="10.7" cy="22.7" rx="1.9" ry="2.4" fill="#dfe8ff" opacity="0.5"/><ellipse cx="19.7" cy="22.7" rx="1.9" ry="2.4" fill="#dfe8ff" opacity="0.5"/>
  <ellipse cx="10.7" cy="22.7" rx="1.3" ry="1.9" fill="#fff"/>
  <ellipse cx="19.7" cy="22.7" rx="1.3" ry="1.9" fill="#fff"/>
  <path d="M2.5 89 Q9 85 15 88 Q21 91 27.5 87 L27.5 93 Q22 102 15 102 Q8 102 2.5 93 Z" fill="url(#wave)" opacity="0.6"/>
  <path d="M4 91 Q10 87 15 90 Q20 93 26 89" stroke="#fff" stroke-width="0.8" fill="none" opacity="0.8"/>
</svg>
<div class="t" style="left:1234px;top:236.5px;font-size:10px;font-weight:bold;color:#333;width:11px;line-height:13px;white-space:normal;text-align:center">职<br>教<br>一<br>问</div>
<!-- tools panel -->
<div class="a" style="left:1228.5px;top:447.5px;width:26px;height:89px;border-radius:13px;background:#fff;box-shadow:0 0 3px rgba(0,0,0,.08);border:1px solid #eef0f3"></div>
<svg class="a" style="left:1233px;top:456px" width="18" height="72" viewBox="0 0 18 72">
  <!-- headset -->
  <path d="M2.6 10 A6.4 6.4 0 0 1 15.4 10" fill="none" stroke="#3d6be6" stroke-width="1.6"/>
  <circle cx="9" cy="10.5" r="5.3" fill="#3d6be6"/>
  <path d="M5.5 10.2 Q9 7.6 12.5 10.2 L12.5 12 Q9 15.5 5.5 12 Z" fill="#fff"/>
  <rect x="1.3" y="8.5" width="2.6" height="5" rx="1.2" fill="#3d6be6"/>
  <rect x="14.1" y="8.5" width="2.6" height="5" rx="1.2" fill="#3d6be6"/>
  <path d="M15.4 13.5 Q15 17.3 10 17.3" fill="none" stroke="#3d6be6" stroke-width="1"/>
  <circle cx="9.5" cy="17.3" r="1" fill="#3d6be6"/>
  <!-- cloud download -->
  <path d="M4.5 42 A3.6 3.6 0 0 1 4.2 34.8 A5 5 0 0 1 13.8 34 A4 4 0 0 1 14 42 Z" fill="#3d6be6"/>
  <path d="M9 33.5 L9 39.5 M6.4 37.2 L9 39.8 L11.6 37.2" stroke="#fff" stroke-width="1.6" fill="none" stroke-linecap="round" stroke-linejoin="round"/>
  <!-- help -->
  <circle cx="9" cy="61.3" r="7.4" fill="#3d6be6"/>
</svg>
<div class="t" style="left:1233px;top:512.2px;width:18px;text-align:center;font-size:10.5px;font-weight:bold;color:#fff">?</div>
<svg class="a" style="left:1236.5px;top:540.5px" width="11" height="11" viewBox="0 0 11 11"><circle cx="5.5" cy="5.5" r="4.4" fill="none" stroke="#a8a8a8" stroke-width="0.8"/><path d="M4 4 L7 7 M7 4 L4 7" stroke="#888" stroke-width="0.9"/></svg>
<div id="scroll" class="a"></div>
<div id="thumb" class="a"></div>
<div id="hthumb" class="a"></div>
<div id="hline" class="a"></div>
</body>
</html>
